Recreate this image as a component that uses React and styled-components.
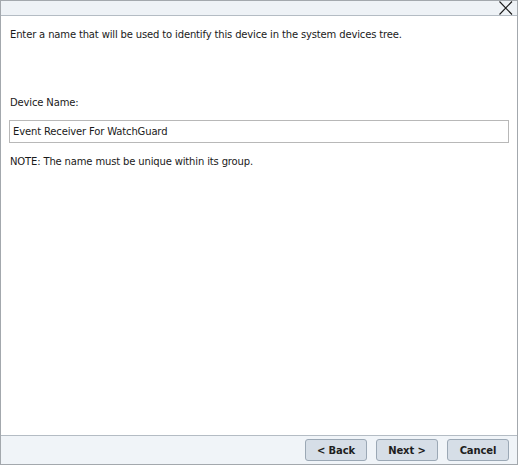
import React from "react";
import styled, { createGlobalStyle } from "styled-components";

const Global = createGlobalStyle`
  html, body { margin: 0; padding: 0; background: #ffffff; }
  body { font-family: "DejaVu Sans", Verdana, sans-serif; }
`;

const Dialog = styled.div`
  box-sizing: border-box;
  width: 518px;
  height: 465px;
  border: 1px solid #a3a8ad;
  display: flex;
  flex-direction: column;
  background: #ffffff;
`;

const TitleBar = styled.div`
  height: 14px;
  background: #eef2f6;
  border-bottom: 1px solid #b4bcc4;
  display: flex;
  justify-content: flex-end;
  align-items: flex-start;
  padding-right: 4px;
`;

const CloseIcon = styled.svg`
  width: 15px;
  height: 14px;
  display: block;
`;

const Body = styled.div`
  flex: 1;
  display: flex;
  flex-direction: column;
  padding: 0 8px 0 8px;
  font-size: 10px;
  letter-spacing: -0.15px;
  color: #1a1a1a;
`;

const Intro = styled.p`
  margin: 13px 0 0 1px;
  line-height: 12px;
`;

const Label = styled.p`
  margin: 56px 0 0 1px;
  line-height: 12px;
`;

const NameInput = styled.div`
  box-sizing: border-box;
  margin-top: 11px;
  height: 23px;
  border: 1px solid #b8b8b8;
  display: flex;
  align-items: center;
  padding-left: 3px;
  line-height: 12px;
`;

const Note = styled.p`
  margin: 13px 0 0 1px;
  line-height: 12px;
`;

const Footer = styled.div`
  height: 28px;
  background: #f0f4f8;
  border-top: 1px solid #b4bcc4;
  display: flex;
  justify-content: flex-end;
  align-items: center;
  gap: 9px;
  padding-right: 8px;
`;

const Button = styled.button`
  box-sizing: border-box;
  width: 62px;
  height: 22px;
  border: 1px solid #9ba8b5;
  border-radius: 3px;
  background: #d6dee7;
  font-family: "DejaVu Sans", Verdana, sans-serif;
  font-weight: bold;
  font-size: 10px;
  letter-spacing: -0.1px;
  color: #1e1e1e;
  padding: 0;
`;

export default function App() {
  return (
    <>
      <Global />
      <Dialog>
        <TitleBar>
          <CloseIcon viewBox="0 0 15 14">
            <path d="M1.5 0.5 L14 13.5 M14 0.5 L1.5 13.5" stroke="#1a1a1a" strokeWidth="1.1" fill="none" />
          </CloseIcon>
        </TitleBar>
        <Body>
          <Intro>Enter a name that will be used to identify this device in the system devices tree.</Intro>
          <Label>Device Name:</Label>
          <NameInput>Event Receiver For WatchGuard</NameInput>
          <Note>NOTE: The name must be unique within its group.</Note>
        </Body>
        <Footer>
          <Button>&lt; Back</Button>
          <Button>Next &gt;</Button>
          <Button>Cancel</Button>
        </Footer>
      </Dialog>
    </>
  );
}
